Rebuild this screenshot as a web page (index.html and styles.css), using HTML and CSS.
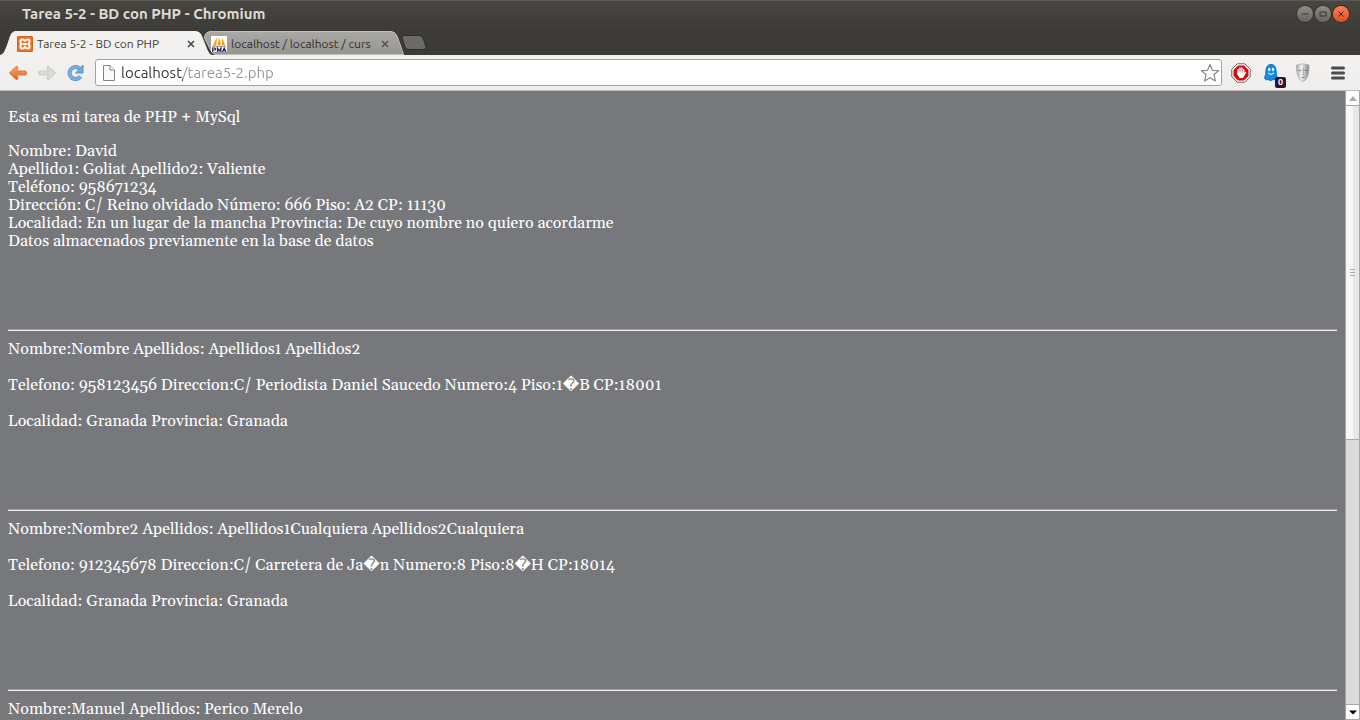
FILE: index.html
```html
<!DOCTYPE html>
<html lang="es">
<head>
<meta charset="utf-8">
<title>Tarea 5-2 - BD con PHP</title>
<link rel="stylesheet" href="styles.css">
</head>
<body>
<header class="titlebar">
  <h1 class="window-title">Tarea 5-2 - BD con PHP - Chromium</h1>
  <div class="window-controls">
    <button class="win-btn" aria-label="Minimizar"><svg width="16" height="16"><path d="M4.500 8h7" stroke="#35342f"/></svg></button>
    <button class="win-btn" aria-label="Maximizar"><svg width="16" height="16"><rect x="5" y="6" width="6" height="4" fill="none" stroke="#35342f"/></svg></button>
    <button class="win-btn win-close" aria-label="Cerrar"><svg width="16" height="16"><path d="M5.500 5.500l5 5m0-5l-5 5" stroke="#4b2013"/></svg></button>
  </div>
</header>

<nav class="tabs" aria-label="Pestañas">
  <div class="tab tab-active">
    <svg class="tab-shape" viewBox="0 0 212 24" preserveAspectRatio="none"><path d="M0 24C4 23 5 19 7 14L10 5Q12 0 16 0H195Q200 0 202 5L206 15C208 20 209 23 212 24Z" fill="#f2f1f0"/></svg>
    <svg class="favicon" width="16" height="16"><rect width="16" height="16" rx="1.500" fill="#ee7326"/><rect x=".5" y=".5" width="15" height="15" rx="1.500" fill="none" stroke="#d9621c"/><path d="M8 5.200Q7 3.500 5.300 3.500Q3.400 3.500 3.400 5.500Q3.400 7 4.500 8Q3.400 9 3.400 10.600Q3.400 12.500 5.300 12.500Q7 12.500 8 10.800Q9 12.500 10.700 12.500Q12.600 12.500 12.600 10.600Q12.600 9 11.500 8Q12.600 7 12.600 5.500Q12.600 3.500 10.700 3.500Q9 3.500 8 5.200M6 8h4" fill="none" stroke="#fff" stroke-width="1.900"/></svg>
    <button class="tab-label">Tarea 5-2 - BD con PHP</button>
    <button class="tab-close" aria-label="Cerrar pestaña"><svg width="8" height="8"><path d="M1 1l6 6M7 1L1 7" stroke="#494949" stroke-width="1.600"/></svg></button>
  </div>
  <div class="tab tab-back">
    <svg class="tab-shape" viewBox="0 0 200 24" preserveAspectRatio="none"><defs><linearGradient id="back" x2="0" y2="1"><stop stop-color="#aaa8a5"/><stop offset="1" stop-color="#979592"/></linearGradient></defs><path d="M0 6Q2 .5 6 .5H187Q191 .5 193 5L197 16Q199 23 200 23.500H11Q8 23 6 18Z" fill="url(#back)" stroke="#c0beb9"/></svg>
    <svg class="favicon" width="16" height="16"><path fill="#fff" d="M0 0h16v16H0z"/><path d="M1.500 10L6 1L5.500 9.500zM6.500 9.500L8 1L10 9.500zM11 9.500V1.500L14.500 9.500z" fill="#f79b20"/><path d="M1 10.500h14" stroke="#aaa"/><path d="M1.700 16v-4h2q1 0 1 1t-1 1h-2M6.500 16v-4l1.700 3 1.700-3v4M11.500 16l1.700-4 1.700 4M12.300 14.700h2" stroke="#27256b" stroke-width="1.200" fill="none"/></svg>
    <button class="tab-label">localhost / localhost / curs</button>
    <button class="tab-close" aria-label="Cerrar pestaña"><svg width="8" height="8"><path d="M1 1l6 6M7 1L1 7" stroke="#4f4d4a" stroke-width="1.400"/></svg></button>
  </div>
  <button class="new-tab" aria-label="Nueva pestaña"><svg width="26" height="16"><path d="M3 .5H18Q21 .5 22 3L25 12Q25.500 14.500 23 14.500H8Q5 14.500 4 12L1 3Q.5 .5 3 .5Z" fill="#6b6a66" stroke="#2e2d29"/></svg></button>
</nav>

<div class="toolbar">
  <button class="tool" aria-label="Atrás"><svg width="20" height="18"><defs><linearGradient id="o" x2="0" y2="1"><stop stop-color="#f9ad6b"/><stop offset="1" stop-color="#dc631d"/></linearGradient></defs><path d="M1.500 9L8 2.500Q10 2 10 4L8.500 7H17Q18.500 7 18.500 9T17 11H8.500L10 14Q10 16 8 15.500Z" fill="url(#o)" stroke="#d9743a"/></svg></button>
  <button class="tool" aria-label="Adelante" disabled><svg width="20" height="18"><path d="M18.500 9L12 2.500Q10 2 10 4L11.500 7H3Q1.500 7 1.500 9T3 11H11.500L10 14Q10 16 12 15.500Z" fill="#dad9d7" stroke="#cbcac8"/></svg></button>
  <button class="tool" aria-label="Recargar"><svg width="20" height="18"><path d="M14.500 12.500A6 6 0 1 1 13.500 4.500" fill="none" stroke="#5a90cb" stroke-width="4"/><path d="M14.500 12.500A6 6 0 1 1 13.500 4.500" fill="none" stroke="#7fb0e2" stroke-width="2.400"/><path d="M17 1v8H9.500Z" fill="#74a8de" stroke="#5a90cb"/></svg></button>
  <div class="omnibox">
    <svg width="14" height="16"><path d="M1.500 .5H8L12.500 5V15.500H1.500Z" fill="#f9f9f9" stroke="#85837f"/><path d="M8 .5V5H12.500" fill="#fff" stroke="#85837f"/></svg>
    <input class="address" aria-label="Dirección" value="localhost/tarea5-2.php">
    <button class="star" aria-label="Añadir a marcadores"><svg width="20" height="20"><path d="M10 1.500L12.400 7.300L18.500 7.700L13.900 11.700L15.400 18L10 14.700L4.600 18L6.100 11.700L1.500 7.700L7.600 7.300Z" fill="#fff" stroke="#888" stroke-width="1.200" stroke-linejoin="round"/></svg></button>
  </div>
  <div class="extensions">
    <button class="ext" aria-label="AdBlock"><svg width="20" height="20"><path d="M6.200 .8H13.800L19.200 6.200V13.800L13.800 19.200H6.200L.8 13.800V6.200Z" fill="#fff" stroke="#666"/><path d="M6.900 2.500H13.100L17.500 6.900V13.100L13.100 17.500H6.900L2.500 13.100V6.900Z" fill="#d80b0b"/><path d="M6.500 8V11.500L8.500 15H12L14.500 10.500" fill="#fff"/><path d="M7.200 11V6.500M9 10V5M10.900 10V5M12.700 10V6.500M12.500 12L14.500 9.500" stroke="#fff" stroke-width="1.400" stroke-linecap="round"/></svg></button>
    <button class="ext" aria-label="Ghostery"><svg width="20" height="20"><path d="M2.500 15Q4 12 4 7Q4.500 1.500 9 1.500T14 7Q14 12 15.500 15Q13 18 11 16.500Q8.500 19 6.500 16.500Q4 18 2.500 15Z" fill="#148ce5" stroke="#0873c5"/><ellipse cx="7.200" cy="6.500" rx="1.200" ry="1.800" fill="#fff"/><ellipse cx="11" cy="6.500" rx="1.200" ry="1.800" fill="#fff"/><path d="M6 10Q9 13 12 10" stroke="#fff" fill="none"/></svg><span class="badge">0</span></button>
    <button class="ext" aria-label="Máscara"><svg width="20" height="20"><defs><linearGradient id="m"><stop stop-color="#aaa"/><stop offset=".4" stop-color="#f2f2f2"/><stop offset="1" stop-color="#808080"/></linearGradient></defs><path d="M3.500 2Q10-.5 16 2Q16.500 12 12.500 17Q10 20 7.500 17Q3 12 3.500 2Z" fill="url(#m)" stroke="#aaa" stroke-width=".7"/><path d="M5 7.300Q7 6 9 7.300Q7 8.300 5 7.300M11 7.300Q13 6 15 7.300Q13 8.300 11 7.300M8 14.500Q10 13.500 12 14.500Q10 15.500 8 14.500" fill="#777"/><path d="M10.500 5V11.500H9" stroke="#aaa" fill="none"/></svg></button>
    <button class="ext menu" aria-label="Menú"><svg width="14" height="14"><path d="M1.500 2h11M1.500 7h11M1.500 12h11" stroke="#474b4c" stroke-width="3" stroke-linecap="round"/></svg></button>
  </div>
</div>

<div class="viewport">
  <main class="page">
    <p class="intro">Esta es mi tarea de PHP + MySql</p>
    <section class="person">
      Nombre: David<br>
      Apellido1: Goliat Apellido2: Valiente<br>
      Teléfono: 958671234<br>
      Dirección: C/ Reino olvidado Número: 666 Piso: A2 CP: 11130<br>
      Localidad: En un lugar de la mancha Provincia: De cuyo nombre no quiero acordarme<br>
      Datos almacenados previamente en la base de datos
    </section>
    <hr class="rule">
    <section class="record">
      <p>Nombre:Nombre Apellidos: Apellidos1 Apellidos2</p>
      <p>Telefono: 958123456 Direccion:C/ Periodista Daniel Saucedo Numero:4 Piso:1<span class="bad">&#xFFFD;</span>B CP:18001</p>
      <p>Localidad: Granada Provincia: Granada</p>
    </section>
    <hr class="rule">
    <section class="record">
      <p>Nombre:Nombre2 Apellidos: Apellidos1Cualquiera Apellidos2Cualquiera</p>
      <p>Telefono: 912345678 Direccion:C/ Carretera de Ja<span class="bad">&#xFFFD;</span>n Numero:8 Piso:8<span class="bad">&#xFFFD;</span>H CP:18014</p>
      <p>Localidad: Granada Provincia: Granada</p>
    </section>
    <hr class="rule">
    <section class="record">
      <p>Nombre:Manuel Apellidos: Perico Merelo</p>
    </section>
  </main>
  <div class="scrollbar">
    <button class="scroll-btn" aria-label="Subir"><svg width="8" height="5"><path d="M0 5L4 0L8 5Z" fill="#aaa"/></svg></button>
    <div class="thumb"><svg width="5" height="7"><path d="M0 .5h5M0 3.500h5M0 6.500h5" stroke="#aaa"/></svg></div>
    <div class="track"></div>
    <button class="scroll-btn" aria-label="Bajar"><svg width="8" height="5"><path d="M0 0.500H8L4 4.500Z" fill="#000"/></svg></button>
  </div>
</div>
</body>
</html>
```
FILE: styles.css
```css
* { box-sizing: border-box; }
body {
  margin: 0;
  height: 100vh;
  display: flex;
  flex-direction: column;
  overflow: hidden;
  background: #3c3b37;
  font-family: Ubuntu, "Noto Sans", sans-serif;
}
button {
  display: flex;
  align-items: center;
  justify-content: center;
  padding: 0;
  border: 0;
  background: none;
  color: inherit;
  font: inherit;
}
svg { display: block; flex: none; }

.titlebar {
  flex: none;
  height: 31px;
  padding: 0 11px 4px 22px;
  display: flex;
  align-items: center;
  justify-content: space-between;
  border-top: 1px solid #5b5a55;
  background: linear-gradient(#474641, #3c3b37);
}
.window-title {
  margin: 0;
  font-size: 15px;
  line-height: 20px;
  font-weight: 700;
  color: #dfdbd2;
}
.window-controls { display: flex; gap: 2px; }
.win-btn {
  width: 16px;
  height: 16px;
  border-radius: 50%;
  background: linear-gradient(#8f8d86, #66645e);
  box-shadow: 0 0 0 1px #34332f;
}
.win-close { background: linear-gradient(#f78058, #e2501f); }

.tabs {
  flex: none;
  height: 24px;
  display: flex;
}
.tab {
  position: relative;
  height: 24px;
  display: flex;
  align-items: center;
  padding-top: 1px;
  font-size: 12px;
  color: #3f3e3b;
}
.tab > * { position: relative; }
.tab > .tab-shape {
  position: absolute;
  inset: 0;
  width: 100%;
  height: 100%;
}
.tab-active { z-index: 1; width: 212px; padding-left: 17px; padding-right: 16px; }
.tab-back { width: 200px; margin-left: -8px; padding-left: 7px; padding-right: 14px; }
.tab-label {
  flex: 1;
  justify-content: flex-start;
  margin: 0 4px;
  line-height: 20px;
  white-space: nowrap;
}
.tab-back .tab-label { color: #2e2d2a; }
.tab-close { width: 10px; height: 16px; }
.new-tab { margin: 4px 0 4px -3px; height: 16px; }

.toolbar {
  flex: none;
  height: 36px;
  padding: 0 15px 0 8px;
  display: flex;
  align-items: center;
  gap: 9px;
  border-bottom: 1px solid #bbbab7;
  background: linear-gradient(#f2f1f0, #efeeec);
}
.tool { width: 20px; height: 20px; }
.omnibox {
  flex: 1;
  min-width: 0;
  height: 27px;
  padding: 0 1px 0 6px;
  display: flex;
  align-items: center;
  gap: 5px;
  border: 1px solid #a5a3a0;
  border-radius: 3px;
  background: #fff;
}
.address {
  flex: 1;
  min-width: 0;
  height: 24px;
  padding: 0;
  border: 0;
  outline: 0;
  font: 15px/20px Ubuntu, "Noto Sans", sans-serif;
  color: transparent;
  background: linear-gradient(90deg, #33322f 62px, #969593 62px);
  background-clip: text;
  -webkit-background-clip: text;
}
.star { width: 20px; height: 20px; }
.extensions { display: flex; align-items: center; gap: 11px; }
.ext { position: relative; width: 20px; height: 20px; }
.badge {
  position: absolute;
  right: -4px;
  bottom: -5px;
  width: 11px;
  height: 11px;
  border-radius: 2px;
  background: #301339;
  color: #fff;
  font-size: 9px;
  line-height: 11px;
  font-weight: 700;
  text-align: center;
}
.menu { width: 14px; margin-left: 7px; }

.viewport { flex: 1; min-height: 0; display: flex; }
.page {
  flex: 1;
  min-width: 0;
  padding: 17px 8px 0;
  overflow: hidden;
  background: #77787c;
  color: #fff;
  font-family: Georgia, Gelasio, "Liberation Serif", serif;
  font-size: 16px;
  line-height: 18px;
}
.intro { margin: 0 0 16px; }
.person, .record { padding-bottom: 72px; }
.record p { margin: 0 0 18px; }
.record p:last-child { margin-bottom: 0; }
.bad { font-family: "DejaVu Sans", sans-serif; line-height: 1; }
.rule {
  height: 2px;
  margin: 7px 0 9px;
  border: 0;
  border-top: 1px solid #a09fa0;
  background: #f0f0ed;
}

.scrollbar {
  flex: none;
  width: 15px;
  display: flex;
  flex-direction: column;
  border: 1px solid #a9a7a5;
  border-top: 0;
  background: #dcdbda;
}
.scroll-btn { flex: none; height: 14px; background: #fff; border-radius: 2px; }
.thumb {
  flex: 335;
  display: flex;
  align-items: center;
  justify-content: center;
  border: solid #a9a7a5;
  border-width: 1px 0;
  background: linear-gradient(90deg, #f8f7f6 50%, #e9e8e7 50%);
}
.track { flex: 265; border-bottom: 1px solid #a9a7a5; }
```
